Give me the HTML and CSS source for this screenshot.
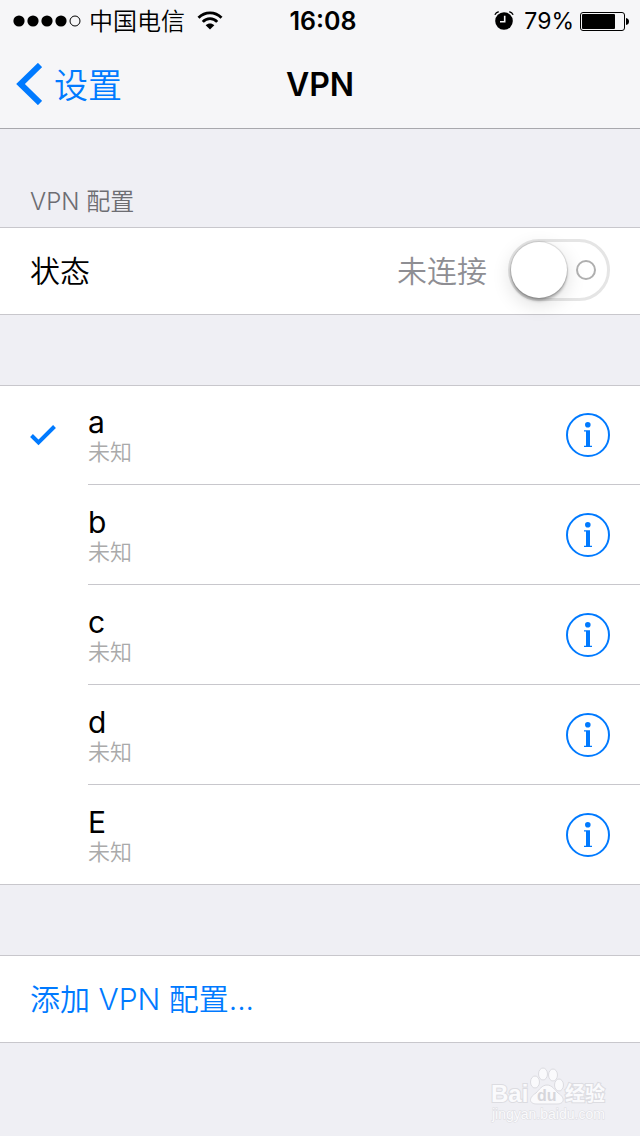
FILE: index.html
```html
<!DOCTYPE html>
<html lang="zh-CN">
<head>
<meta charset="utf-8">
<meta name="viewport" content="width=device-width, initial-scale=1">
<title>VPN</title>
<link rel="stylesheet" href="styles.css">
</head>
<body>
<svg class="symbols" width="0" height="0" aria-hidden="true">
  <symbol id="info" viewBox="0 0 44 44">
    <circle cx="22" cy="22" r="21" fill="none" stroke="currentColor" stroke-width="2"/>
    <circle cx="21.800" cy="11.800" r="2.800" fill="currentColor"/>
    <path d="M18 17.200h6v15.600h2V34h-8v-1.200h2V18.400h-2z" fill="currentColor"/>
  </symbol>
</svg>
<div class="screen">
  <header class="header">
    <div class="status">
      <div class="status-left">
        <svg width="68" height="12" viewBox="0 0 68 12" aria-hidden="true">
          <circle cx="6" cy="6" r="5.600"/><circle cx="20" cy="6" r="5.600"/><circle cx="34" cy="6" r="5.600"/><circle cx="48" cy="6" r="5.600"/>
          <circle cx="62" cy="6" r="5" fill="none" stroke="#000"/>
        </svg>
        <span class="carrier">中国电信</span>
        <svg class="wifi" width="26" height="20" viewBox="0 0 26 20" aria-hidden="true">
          <path d="M1.500 6.800C8 .2 18 .2 24.500 6.800M5.800 10.900c4-4.400 10.400-4.400 14.400 0" fill="none" stroke="#000" stroke-width="2.800"/>
          <path d="M8.700 14.200c2.500-2.400 6.100-2.400 8.600 0L13 18.600z"/>
        </svg>
      </div>
      <span class="time">16:08</span>
      <div class="status-right">
        <svg width="20" height="20" viewBox="0 0 20 20" aria-hidden="true">
          <circle cx="10" cy="10" r="8.800"/>
          <path d="M.9 3.700Q2 1.200 4.700 .7M15.300 .7Q18 1.200 19.100 3.700" fill="none" stroke="#000" stroke-width="1.400"/>
          <path d="M10.700 4.800v5.900H6" fill="none" stroke="#f6f6f8" stroke-width="1.600"/>
        </svg>
        <span class="percent">79%</span>
        <svg width="49" height="19" viewBox="0 0 49 19" aria-hidden="true">
          <rect x=".5" y=".5" width="44" height="18" rx="2.500" fill="none" stroke="#000"/>
          <rect x="2" y="2" width="33" height="15" rx="1"/>
          <path d="M46 6q3 .5 3 3.500t-3 3.500z"/>
        </svg>
      </div>
    </div>
    <nav class="nav">
      <a class="back" href="#">
        <svg width="26" height="42" viewBox="0 0 26 42" aria-hidden="true"><path d="M24 2L4.500 21 24 40" fill="none" stroke="currentColor" stroke-width="6"/></svg>
        <span class="back-label">设置</span>
      </a>
      <h1 class="title">VPN</h1>
    </nav>
  </header>

  <main>
    <h2 class="section-title">VPN 配置</h2>
    <section class="group">
      <div class="row">
        <label for="vpn-switch">状态</label>
        <span class="state">未连接</span>
        <input class="switch" id="vpn-switch" type="checkbox" role="switch">
      </div>
    </section>

    <ul class="group list">
      <li class="item">
        <svg class="check" width="26" height="22" viewBox="0 0 26 22" aria-hidden="true"><path d="M1.500 10.500l7 7L24.500 1.500" fill="none" stroke="currentColor" stroke-width="4"/></svg>
        <div class="item-body"><div><div class="name">a</div><div class="sub">未知</div></div><button class="info" aria-label="a 详情"><svg width="44" height="44"><use href="#info"/></svg></button></div>
      </li>
      <li class="item"><div class="item-body"><div><div class="name">b</div><div class="sub">未知</div></div><button class="info" aria-label="b 详情"><svg width="44" height="44"><use href="#info"/></svg></button></div></li>
      <li class="item"><div class="item-body"><div><div class="name">c</div><div class="sub">未知</div></div><button class="info" aria-label="c 详情"><svg width="44" height="44"><use href="#info"/></svg></button></div></li>
      <li class="item"><div class="item-body"><div><div class="name">d</div><div class="sub">未知</div></div><button class="info" aria-label="d 详情"><svg width="44" height="44"><use href="#info"/></svg></button></div></li>
      <li class="item"><div class="item-body"><div><div class="name">E</div><div class="sub">未知</div></div><button class="info" aria-label="E 详情"><svg width="44" height="44"><use href="#info"/></svg></button></div></li>
    </ul>

    <section class="group">
      <button class="row add">添加 VPN 配置...</button>
    </section>
  </main>

  <div class="watermark">
    <svg width="120" height="60" viewBox="0 0 120 60" role="img" aria-label="Baidu 经验">
      <g class="mark">
        <text x="1" y="36" class="mark-latin">Bai</text>
        <path d="M57 19c5 0 8 5 11 8 8 5 6 11-1 11H47c-8 0-9-6-1-11 3-3 6-8 11-8z"/>
        <ellipse cx="45" cy="16" rx="4.500" ry="6"/>
        <ellipse cx="53" cy="8" rx="4.500" ry="6"/>
        <ellipse cx="63" cy="9" rx="4.500" ry="6"/>
        <ellipse cx="69" cy="19" rx="4.500" ry="6"/>
        <text x="75" y="35" class="mark-cjk">经验</text>
      </g>
      <text x="47" y="35" class="mark-du">du</text>
      <text x="2" y="53" class="mark-url">jingyan.baidu.com</text>
    </svg>
  </div>
</div>
</body>
</html>
```
FILE: styles.css
```css
*, *::before, *::after { box-sizing: border-box; }
body {
  margin: 0;
  background: #efeff4;
  color: #000;
  font-family: Inter, "Noto Sans CJK SC", sans-serif;
  font-size: 30px;
}
svg { display: block; flex: none; }
.symbols { position: absolute; }
button { font: inherit; border: 0; padding: 0; background: none; color: inherit; }
.screen { position: relative; min-height: 100vh; }

.header { background: #f6f6f8; border-bottom: 1px solid #a8a8ad; }
.status {
  display: grid;
  grid-template-columns: 1fr auto 1fr;
  align-items: center;
  height: 40px;
  padding: 1px 11px 0 13px;
  font-size: 24px;
  line-height: 38px;
}
.status-left, .status-right { display: flex; align-items: center; }
.status-right { justify-content: flex-end; }
.carrier { margin: 0 12px 0 8px; padding-top: 2px; font-weight: 350; }
.time { padding-left: 4px; font-size: 25px; font-weight: 600; }
.percent { margin: 0 6px 0 10px; font-size: 23px; }

.nav {
  display: grid;
  grid-template-columns: 1fr auto 1fr;
  align-items: center;
  height: 88px;
  padding: 0 16px;
}
.back {
  display: flex;
  align-items: center;
  gap: 12px;
  color: #007aff;
  font-size: 34px;
  line-height: 44px;
  font-weight: 350;
  text-decoration: none;
}
.back-label { padding-top: 3px; }
.title { margin: 0; padding-top: 2px; font-size: 32px; line-height: 44px; font-weight: 600; }

.section-title {
  margin: 0;
  padding: 57px 30px 9px;
  color: #6d6d72;
  font-size: 24px;
  line-height: 32px;
  font-weight: 350;
}
.group {
  margin: 0 0 70px;
  background: #fff;
  border: solid #c8c7cc;
  border-width: 1px 0;
}
.row {
  display: flex;
  align-items: center;
  width: 100%;
  height: 86px;
  padding: 0 30px;
  line-height: 44px;
  font-weight: 350;
}
.state { margin: 0 21px 0 auto; color: #8e8e93; }
.switch {
  appearance: none;
  display: flex;
  align-items: center;
  justify-content: space-between;
  width: 102px;
  height: 62px;
  margin: 0 0 2px;
  padding: 0 11px 0 0;
  border: 3px solid #e5e5e5;
  border-radius: 31px;
}
.switch::before {
  content: "";
  width: 56px;
  height: 56px;
  border-radius: 50%;
  background: #fff;
  box-shadow: 0 0 1px 1px rgba(0, 0, 0, .12), 0 3px 3px rgba(0, 0, 0, .26), 0 6px 20px rgba(0, 0, 0, .14);
}
.switch::after {
  content: "";
  width: 20px;
  height: 20px;
  border: 2px solid #afafaf;
  border-radius: 50%;
}

.list { padding: 0; list-style: none; }
.item { display: grid; grid-template-columns: 88px 1fr; align-items: center; }
.item-body {
  grid-column: 2;
  display: flex;
  align-items: center;
  justify-content: space-between;
  height: 100px;
  padding-right: 30px;
  border-bottom: 1px solid #c8c7cc;
}
.item:first-child .item-body { height: 99px; }
.item:last-child .item-body { height: 99px; border-bottom: 0; }
.check { margin-left: 30px; color: #007aff; }
.name { padding-top: 2px; line-height: 32px; }
.sub { color: #aaa; font-size: 22px; line-height: 28px; font-weight: 350; }
.info { color: #007aff; }
.add { color: #007aff; }

.watermark { position: absolute; right: 30px; bottom: 10px; }
.mark { fill: #fafafc; stroke: #dcdce1; stroke-width: 1; }
.mark-latin { font: 700 24px "Liberation Sans", sans-serif; paint-order: stroke; stroke-width: 2; }
.mark-cjk { font: 700 20px "Noto Sans CJK SC", sans-serif; paint-order: stroke; stroke-width: 2; }
.mark-du { fill: #d6d6db; font: 700 16px "Liberation Sans", sans-serif; }
.mark-url { fill: #fafafc; stroke: #dcdce1; stroke-width: 1; paint-order: stroke; font: 400 14px "Liberation Sans", sans-serif; }
```
